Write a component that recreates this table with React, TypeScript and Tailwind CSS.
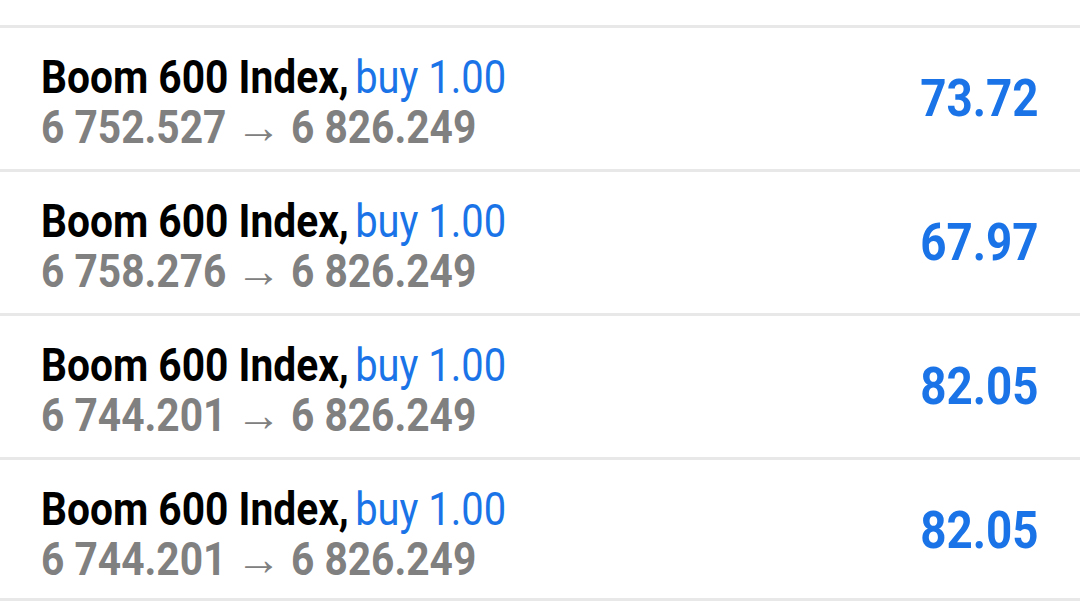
import React from "react";

const rows = [
  { open: "6 752.527", close: "6 826.249", profit: "73.72" },
  { open: "6 758.276", close: "6 826.249", profit: "67.97" },
  { open: "6 744.201", close: "6 826.249", profit: "82.05" },
  { open: "6 744.201", close: "6 826.249", profit: "82.05" },
];

export default function App() {
  return (
    <div
      className="w-[1080px] h-[607px] bg-white overflow-hidden pt-[25px]"
      style={{ fontFamily: "Roboto, 'Liberation Sans', sans-serif" }}
    >
      {rows.map((r, i) => (
        <div
          key={i}
          className={`flex justify-between h-[144px] border-t-[3px] border-[#e8e8e8] ${i === rows.length - 1 ? "border-b-[3px]" : ""}`}
        >
          <div className="pl-[41px] pt-[24px]">
            <div className="origin-left scale-x-[0.885]">
              <div className="text-[46px] leading-[50px] font-bold whitespace-nowrap">
                <span className="text-black">Boom 600 Index,</span>
                <span className="text-[#1a74e8] font-normal ml-[7px] inline-block scale-x-[0.98] origin-left">buy 1.00</span>
              </div>
              <div className="text-[46px] leading-[50px] font-bold text-[#808080] whitespace-nowrap">
                {r.open} <span className="font-normal inline-block mx-[2px] scale-x-[1.12]">→</span> {r.close}
              </div>
            </div>
          </div>
          <div className="pr-[42px] pt-[45px]">
            <div className="origin-right scale-x-[0.88] text-[52px] leading-[52px] font-bold text-[#1a74e8]">
              {r.profit}
            </div>
          </div>
        </div>
      ))}
    </div>
  );
}
